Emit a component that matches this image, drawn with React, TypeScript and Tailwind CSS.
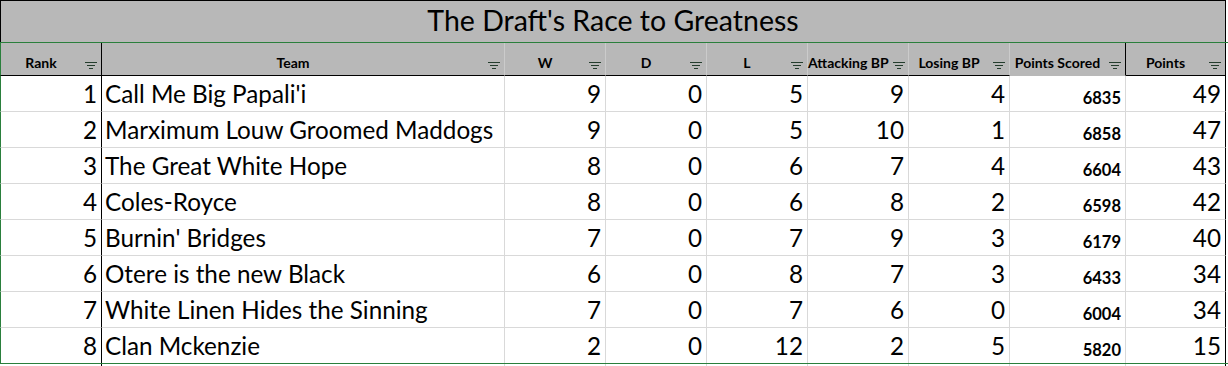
import React from "react";

type Row = {
  rank: number;
  team: string;
  w: number;
  d: number;
  l: number;
  abp: number;
  lbp: number;
  ps: number;
  pts: number;
};

const rows: Row[] = [
  { rank: 1, team: "Call Me Big Papali'i", w: 9, d: 0, l: 5, abp: 9, lbp: 4, ps: 6835, pts: 49 },
  { rank: 2, team: "Marximum Louw Groomed Maddogs", w: 9, d: 0, l: 5, abp: 10, lbp: 1, ps: 6858, pts: 47 },
  { rank: 3, team: "The Great White Hope", w: 8, d: 0, l: 6, abp: 7, lbp: 4, ps: 6604, pts: 43 },
  { rank: 4, team: "Coles-Royce", w: 8, d: 0, l: 6, abp: 8, lbp: 2, ps: 6598, pts: 42 },
  { rank: 5, team: "Burnin' Bridges", w: 7, d: 0, l: 7, abp: 9, lbp: 3, ps: 6179, pts: 40 },
  { rank: 6, team: "Otere is the new Black", w: 6, d: 0, l: 8, abp: 7, lbp: 3, ps: 6433, pts: 34 },
  { rank: 7, team: "White Linen Hides the Sinning", w: 7, d: 0, l: 7, abp: 6, lbp: 0, ps: 6004, pts: 34 },
  { rank: 8, team: "Clan Mckenzie", w: 2, d: 0, l: 12, abp: 2, lbp: 5, ps: 5820, pts: 15 },
];

function FilterIcon() {
  return (
    <svg width="12" height="7" viewBox="0 0 12 7" className="block">
      <rect x="0" y="0" width="12" height="1" fill="#243d2d" />
      <rect x="2" y="3" width="8" height="1" fill="#243d2d" />
      <rect x="4" y="6" width="4" height="1" fill="#243d2d" />
    </svg>
  );
}

function HeaderCell({ label, className }: { label: string; className: string }) {
  return (
    <div className={`flex h-[33px] bg-[#b8b8b8] ${className}`}>
      <div className="flex flex-1 items-end justify-center overflow-visible whitespace-nowrap pb-[4px] text-[14px] font-bold leading-[16px] text-black">
        {label}
      </div>
      <div className="flex w-[20px] shrink-0 items-end justify-center pb-[6px]">
        <FilterIcon />
      </div>
    </div>
  );
}

const numCell = "w-[101px] border-r border-[#d9d9d9] pr-[4px] text-right";

export default function App() {
  return (
    <div className="h-[366px] w-[1228px] overflow-hidden bg-white font-['Lato',sans-serif] text-black">
      {/* Title */}
      <div className="h-[42px] w-[1226px] border-l border-r border-t border-black bg-[#b8b8b8] text-center text-[28.5px] leading-[38px]">
        The Draft's Race to Greatness
      </div>
      <div className="h-px w-[1228px] bg-[#2a7f3c]" />

      {/* Header */}
      <div className="flex w-[1226px]">
        <HeaderCell label="Rank" className="w-[102px] border-b border-l border-r border-b-black border-l-[#2a7f3c] border-r-black" />
        <HeaderCell label="Team" className="w-[403px] border-b border-r border-b-black border-r-[#cbcbcb]" />
        <HeaderCell label="W" className="w-[101px] border-b border-r border-b-black border-r-[#cbcbcb]" />
        <HeaderCell label="D" className="w-[101px] border-b border-r border-b-black border-r-[#cbcbcb]" />
        <HeaderCell label="L" className="w-[101px] border-b border-r border-b-black border-r-[#cbcbcb]" />
        <HeaderCell label="Attacking BP" className="w-[101px] border-b border-r border-b-black border-r-[#cbcbcb]" />
        <HeaderCell label="Losing BP" className="w-[101px] border-b border-r border-b-black border-r-[#cbcbcb]" />
        <HeaderCell label="Points Scored" className="w-[116px] border-b border-r border-b-[#b8b8b8] border-r-black" />
        <HeaderCell label="Points" className="w-[100px] border-b border-r border-b-black border-r-black" />
      </div>

      {/* Data */}
      {rows.map((r, i) => {
        const last = i === rows.length - 1;
        const h = last ? "h-[35px]" : "h-[36px] border-b border-b-[#d9d9d9]";
        return (
          <div key={r.rank} className="flex w-[1226px] text-[24.25px] leading-[35px]">
            <div className={`${h} w-[102px] border-l border-r border-l-[#2a7f3c] border-r-black pr-[4px] text-right`}>{r.rank}</div>
            <div className={`${h} w-[403px] overflow-hidden whitespace-nowrap border-r border-r-[#d9d9d9] pl-[3px]`}>{r.team}</div>
            <div className={`${h} ${numCell}`}>{r.w}</div>
            <div className={`${h} ${numCell}`}>{r.d}</div>
            <div className={`${h} ${numCell}`}>{r.l}</div>
            <div className={`${h} ${numCell}`}>{r.abp}</div>
            <div className={`${h} ${numCell}`}>{r.lbp}</div>
            <div className={`${h} flex w-[116px] items-end justify-end border-r border-r-[#d9d9d9] pb-[3px] pr-[4px] text-[16.5px] font-bold leading-[19px]`}>
              {r.ps}
            </div>
            <div className={`${h} w-[100px] border-r border-r-black pr-[4px] text-right`}>{r.pts}</div>
          </div>
        );
      })}
      <div className="h-px w-[1228px] bg-[#2a7f3c]" />
      <div className="flex h-[2px] w-[1226px]">
        <div className="h-[2px] w-[102px] border-r border-black" />
        <div className="h-[2px] w-[403px] border-r border-[#d9d9d9]" />
        <div className="h-[2px] w-[101px] border-r border-[#d9d9d9]" />
        <div className="h-[2px] w-[101px] border-r border-[#d9d9d9]" />
        <div className="h-[2px] w-[101px] border-r border-[#d9d9d9]" />
        <div className="h-[2px] w-[101px] border-r border-[#d9d9d9]" />
        <div className="h-[2px] w-[101px] border-r border-[#d9d9d9]" />
        <div className="h-[2px] w-[116px] border-r border-[#d9d9d9]" />
        <div className="h-[2px] w-[100px] border-r border-black" />
      </div>
    </div>
  );
}
